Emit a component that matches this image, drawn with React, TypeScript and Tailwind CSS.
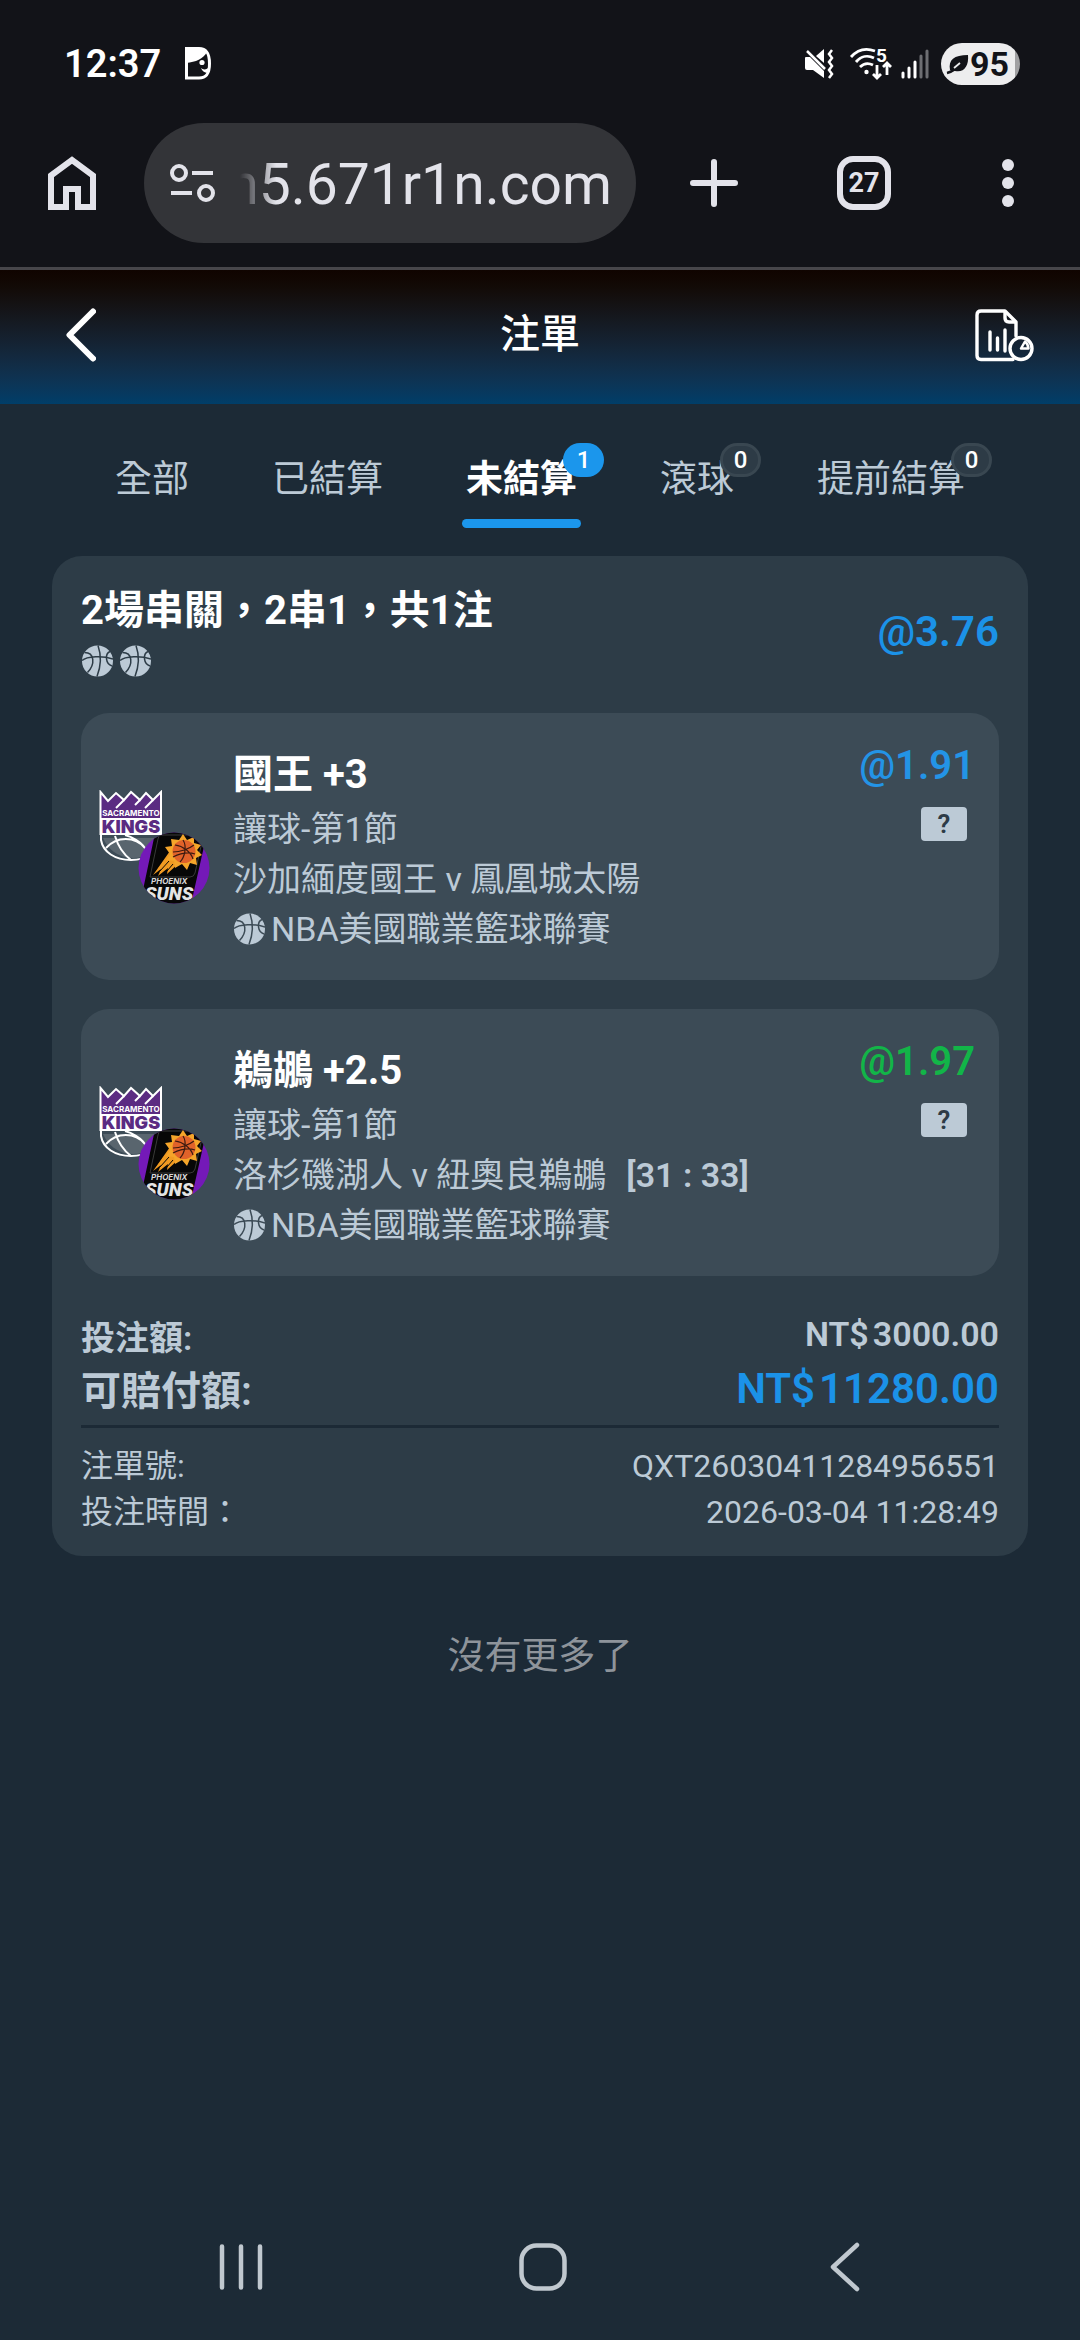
import React from 'react';

type Tab = { label: string; count?: number; active?: boolean };

type Leg = {
  pick: string;
  odds: string;
  oddsClass: string;
  market: string;
  match: string;
  score?: string;
  league: string;
};

const tabs: Tab[] = [
  { label: '全部' },
  { label: '已結算' },
  { label: '未結算', count: 1, active: true },
  { label: '滾球', count: 0 },
  { label: '提前結算', count: 0 },
];

const legs: Leg[] = [
  {
    pick: '國王 +3',
    odds: '1.91',
    oddsClass: 'text-[#2394e6]',
    market: '讓球-第1節',
    match: '沙加緬度國王 v 鳳凰城太陽',
    league: 'NBA美國職業籃球聯賽',
  },
  {
    pick: '鵜鶘 +2.5',
    odds: '1.97',
    oddsClass: 'text-[#12b548]',
    market: '讓球-第1節',
    match: '洛杉磯湖人 v 紐奧良鵜鶘',
    score: '[31 : 33]',
    league: 'NBA美國職業籃球聯賽',
  },
];

const Basketball: React.FC<{ line: string }> = ({ line }) => (
  <svg viewBox="0 0 32 32" className="size-8 shrink-0" fill="none">
    <circle cx="16.5" cy="16" r="15.5" fill="#bccad6" />
    <g className={line} strokeWidth="1.5">
      <path d="M1 15.5C6 11 22 10.5 32 14" />
      <path d="M17 0.5C20 9 20 21 16 31.5" />
      <path d="M3.5 7.5C13.5 7.5 14.5 19 6.5 27.5" />
      <path d="M29 6.5C23.5 9 24.5 19 31 21" />
    </g>
  </svg>
);

const KingsLogo: React.FC = () => (
  <svg viewBox="0 0 64 72" className="h-[72px] w-16" fill="none">
    <path d="M6 52C12 62 22 68 34 68C48 68 58 60 60 48H4Z" fill="#59656e" />
    <path d="M2 44V50C4 62 16 70 32 70C48 70 60 62 62 50V44" stroke="#fff" strokeWidth="2" />
    <path d="M7 58C18 46 36 46 46 58M16 46C19 56 24 64 32 70M26 45C30 46 44 51 48 62" stroke="#fff" strokeWidth="2" />
    <path
      d="M1.5 2L9 11L17 3L25 10L32 2L41 10L47 3L54 10L62 2V44H1.5Z"
      fill="#5b2b82"
      stroke="#fff"
      strokeWidth="2"
    />
    <path d="M25 10L17 18M41 10L36 15M54 10L46 18" stroke="#fff" strokeWidth="2" />
    <path d="M2 28H62V44H2Z" fill="#fff" />
    <text x="32" y="26" textAnchor="middle" className="fill-white font-['Inter'] text-[8px] font-bold">
      SACRAMENTO
    </text>
    <text x="32" y="42.5" textAnchor="middle" className="fill-[#5b2b82] font-['Inter'] text-[18px] font-black">
      KINGS
    </text>
  </svg>
);

const SunsLogo: React.FC = () => (
  <svg viewBox="0 0 72 72" className="size-[72px]" fill="none">
    <defs>
      <clipPath id="suns-disc">
        <circle cx="36" cy="36" r="35.5" />
      </clipPath>
    </defs>
    <g clipPath="url(#suns-disc)">
      <rect width="72" height="72" fill="#7419b8" />
      <path d="M20 0H62Q69 2 67 10L53 72H2L16 6Q17 1 20 0Z" fill="#070707" />
      <path d="M22 3H60Q66 4 64 10L57 41Q56 45 52 45H12L20 7Q21 3 22 3Z" stroke="#3a3a3a" />
      <path d="M32 19L15 43L23 37L20 44L30 36L29 42L42 30Z" fill="#f09a22" />
      <path
        d="M45 2L49 8L56 5L56 11L63 13L59 18L64 23L58 26L59 33L52 31L49 38L44 32L37 36L36 29L28 28L32 22L27 15L34 14L33 7L41 8Z"
        fill="#f5a52a"
      />
      <circle cx="46" cy="19.5" r="11.5" fill="#e0622a" />
      <path
        d="M35 20C42 20 51 17 56 13M45 8C49 14 47 25 42 30M37 13C45 14 53 20 55 27M35 25C43 21 51 20 57 22"
        stroke="#3b1a10"
        strokeWidth="1.2"
      />
      <path d="M27 24L17 39M31 29L22 39M35 32L29 39" stroke="#070707" />
      <text x="13" y="52" className="fill-[#d8d8d8] font-['Inter'] text-[8px] font-bold italic">
        PHOENIX
      </text>
      <text x="7" y="68" className="fill-[#e4e4e4] font-['Roboto'] text-[19px] font-black italic">
        SUNS
      </text>
    </g>
  </svg>
);

const StatusBar: React.FC = () => (
  <div className="flex h-[123px] items-center justify-between pt-1 pr-[60px] pl-16 text-white">
    <div className="flex items-center gap-6">
      <span className="text-[38px] leading-none font-semibold">12:37</span>
      <svg viewBox="0 0 26 33" className="h-[33px] w-[26px]" fill="none">
        <path d="M1.5 1.5H14C22 1.5 24.5 7 24.5 16.5C24.5 26 22 31 14 31H1.5Z" stroke="#fff" strokeWidth="3" />
        <path d="M1 1H15C19 1 21 3 22 5C18 12 11 15 1 16Z" fill="#fff" />
        <circle cx="17" cy="15.5" r="2.6" fill="#fff" />
        <path d="M16 21C18 23 22 23 24 20V26C20 26 17 24 16 21Z" fill="#fff" />
      </svg>
    </div>
    <div className="flex items-center">
      <svg viewBox="0 0 31 32" className="mr-3.5 h-8 w-[31px]" fill="none">
        <path d="M1 10Q1 9 2 9H6L20 23V30L9 22H3Q1 22 1 20Z" fill="#fff" />
        <path d="M20 1V15L12 8Z" fill="#fff" />
        <path d="M3 3L21 21" stroke="#fff" strokeWidth="2.5" />
        <path d="M28 2L25 6L28 10L25 14L28 18L25 22L28 26L25 30" stroke="#fff" strokeWidth="2.5" />
      </svg>
      <svg viewBox="0 -6 44 46" className="mr-2 h-[46px] w-11" fill="none">
        <path d="M2 10C9 2 18 1 26 4M7 15C12 9 19 8 25 11M11 20C15 16 20 16 24 18" stroke="#fff" strokeWidth="2.8" />
        <circle cx="17.5" cy="25" r="2.2" fill="#fff" />
        <path d="M28 18V31M24 27L28 31L32 27M38 28V17M34 20L38 16L42 20" stroke="#fff" strokeWidth="2.8" />
        <text x="27" y="15" className="fill-white font-['Roboto'] text-[19px] font-bold">
          5
        </text>
      </svg>
      <svg viewBox="0 0 28 32" className="mr-3 h-8 w-7" strokeWidth="3" strokeLinecap="round">
        <path d="M2 25V29M8 20V29M14 14V29" stroke="#fff" />
        <path d="M20 8V29M26 3V29" stroke="#6d6e72" />
      </svg>
      <div className="flex h-[42px] w-[79px] items-center rounded-full bg-linear-to-r from-[#ededee] from-94% to-[#a0a0a2] to-94% pl-[5px] text-[#121318]">
        <svg viewBox="0 0 24 22" className="h-[22px] w-6 shrink-0" fill="none">
          <path d="M4 17C2 7 8 2 22 2C23 13 18 20 9 18Z" fill="#121318" />
          <path d="M1 20C6 19 10 16 14 10" stroke="#121318" strokeWidth="2.5" />
          <path d="M8 15L14 10" stroke="#ededee" strokeWidth="1.8" />
        </svg>
        <span className="text-[34px] leading-none font-bold">95</span>
      </div>
    </div>
  </div>
);

const BrowserBar: React.FC = () => (
  <div className="flex h-36 items-center pb-6 text-[#e3e3ea]">
    <button aria-label="Home" className="flex w-36 justify-center">
      <svg viewBox="0 0 48 54" className="h-[54px] w-12" fill="none" stroke="currentColor" strokeWidth="6">
        <path d="M3 19.5L24 4L45 19.5V51H30V33H18V51H3Z" />
      </svg>
    </button>
    <div className="flex h-[120px] min-w-0 flex-1 items-center rounded-full bg-[#333438] pr-6 pl-[26px]">
      <svg viewBox="0 0 46 40" className="h-10 w-[46px] shrink-0" fill="none" stroke="currentColor" strokeWidth="4">
        <circle cx="9" cy="10" r="7" />
        <path d="M22 10H43M1 30H22" />
        <circle cx="36" cy="30" r="7" />
      </svg>
      <div className="ml-6 flex min-w-0 flex-1 justify-end overflow-hidden [mask-image:linear-gradient(to_right,transparent,black_36px)]">
        <input
          aria-label="Address"
          readOnly
          value="n5.671r1n.com"
          className="w-[440px] shrink-0 bg-transparent pt-1 text-right text-[57px] leading-[80px] outline-none"
        />
      </div>
    </div>
    <button aria-label="New tab" className="flex w-[156px] justify-center">
      <svg viewBox="0 0 48 48" className="size-12" stroke="currentColor" strokeWidth="6" strokeLinecap="round">
        <path d="M24 3V45M3 24H45" />
      </svg>
    </button>
    <button aria-label="Tabs" className="flex w-36 justify-center">
      <span className="flex size-[54px] items-center justify-center rounded-2xl border-6 border-current text-[27px] leading-none font-bold">
        27
      </span>
    </button>
    <button aria-label="More" className="flex w-36 justify-center">
      <svg viewBox="0 0 12 48" className="h-12 w-3" fill="currentColor">
        <circle cx="6" cy="6" r="6" />
        <circle cx="6" cy="24" r="6" />
        <circle cx="6" cy="42" r="6" />
      </svg>
    </button>
  </div>
);

const PageHeader: React.FC = () => (
  <header className="flex h-[137px] items-center justify-between border-t-3 border-[#47464a] bg-linear-to-b from-[#100400] to-[#003e69] px-[46px] pb-1 text-white">
    <button aria-label="返回" className="flex w-[70px] justify-center">
      <svg viewBox="0 0 30 54" className="h-[54px] w-[30px]" fill="none" stroke="currentColor" strokeWidth="6" strokeLinecap="round" strokeLinejoin="round">
        <path d="M27 3.5L3.5 27L27 50.5" />
      </svg>
    </button>
    <h1 className="text-[40px] leading-none font-medium">注單</h1>
    <button aria-label="報表" className="flex w-[70px] justify-end">
      <svg viewBox="0 0 60 54" className="h-[54px] w-[60px]" fill="none" stroke="currentColor" strokeWidth="3.4" strokeLinecap="round" strokeLinejoin="round">
        <path d="M39 51.5H7Q3 51.5 3 47.5V7Q3 3 7 3H31L42 14V28" />
        <path d="M31 4V10Q31 14 35 14H41" />
        <path d="M16 24V42M23.5 30V42M31 22V43" />
        <circle cx="47" cy="40.5" r="11" />
        <path d="M47 40.5L51 33.5Q54 36 54.5 40.5Z" strokeWidth="2.5" />
      </svg>
    </button>
  </header>
);

const TabNav: React.FC = () => (
  <nav className="flex justify-center gap-[83px] pt-[52px]">
    {tabs.map((tab) => (
      <button
        key={tab.label}
        className={`relative h-[72px] pb-6 text-[37px] leading-[48px] ${
          tab.active ? 'font-bold text-white' : 'text-[#bccad6]'
        }`}
      >
        {tab.label}
        {tab.count !== undefined && (
          <span
            className={`absolute -top-[13px] left-full -ml-3.5 flex h-[34px] w-[41px] items-center justify-center rounded-full text-[24px] leading-none font-medium text-white ${
              tab.active ? 'bg-[#1b96ec]' : 'border-3 border-[#394751] bg-[#2d3b46]'
            }`}
          >
            {tab.count}
          </span>
        )}
        {tab.active && <span className="absolute -inset-x-1 bottom-0 h-[9px] rounded-full bg-[#1b96ec]" />}
      </button>
    ))}
  </nav>
);

const LegCard: React.FC<{ leg: Leg }> = ({ leg }) => (
  <li className="flex rounded-[28px] bg-[#3c4b56] pl-[18px] text-[#bccad6]">
    <div className="relative h-[113px] w-[134px] shrink-0 self-center">
      <KingsLogo />
      <div className="absolute top-[42px] left-[39px]">
        <SunsLogo />
      </div>
    </div>
    <div className="min-w-0 flex-1 pt-[33px] pb-[26px] text-[34px] leading-[50px]">
      <h3 className="text-[40px] leading-[58px] font-bold text-white">{leg.pick}</h3>
      <p>{leg.market}</p>
      <p>
        {leg.match}
        {leg.score && <span className="ml-5 font-semibold">{leg.score}</span>}
      </p>
      <p className="flex items-center gap-1.5">
        <Basketball line="stroke-[#3c4b56]" />
        {leg.league}
      </p>
    </div>
    <div className="flex flex-col items-end pt-6 pr-6">
      <p className={`text-[40px] leading-[58px] font-semibold ${leg.oddsClass}`}>
        <span className="font-medium">@</span>
        {leg.odds}
      </p>
      <button
        aria-label="說明"
        className="mt-3 mr-2 flex h-[34px] w-[46px] items-center justify-center rounded bg-[#bccad6] text-[26px] leading-none font-semibold text-[#2d3b46]"
      >
        ?
      </button>
    </div>
  </li>
);

const Summary: React.FC = () => (
  <dl className="mt-[35px] text-[#bccad6]">
    <div className="flex justify-between font-semibold">
      <dt className="text-[34px] leading-[54px]">投注額:</dt>
      <dd className="text-[34px] leading-[46px]">
        NT$<span className="ml-1">3000.00</span>
      </dd>
    </div>
    <div className="flex justify-between border-b-3 border-[#1c2a36] pb-1.5 font-semibold">
      <dt className="text-[40px] leading-[54px]">可賠付額:</dt>
      <dd className="text-[42px] leading-[48px] text-[#1b92e8]">
        NT$<span className="ml-1">11280.00</span>
      </dd>
    </div>
    <div className="flex justify-between pt-[15px] text-[32px] leading-[46px]">
      <dt>注單號:</dt>
      <dd>QXT26030411284956551</dd>
    </div>
    <div className="flex justify-between text-[32px] leading-[46px]">
      <dt>投注時間：</dt>
      <dd>2026-03-04 11:28:49</dd>
    </div>
  </dl>
);

const SystemNav: React.FC = () => (
  <div className="flex h-[146px] items-center pr-[84px] pl-[90px] text-[#c0c8cf]">
    <button aria-label="Recents" className="flex flex-1 justify-center">
      <svg viewBox="0 0 44 48" className="h-12 w-11" stroke="currentColor" strokeWidth="4.5" strokeLinecap="round">
        <path d="M3 3.5V44.5M22 3.5V44.5M41 3.5V44.5" />
      </svg>
    </button>
    <button aria-label="Home screen" className="flex flex-1 justify-center">
      <svg viewBox="0 0 48 48" className="size-12" fill="none" stroke="currentColor" strokeWidth="4.5">
        <rect x="2.5" y="2.5" width="43" height="43" rx="15" />
      </svg>
    </button>
    <button aria-label="Back" className="flex flex-1 justify-center">
      <svg viewBox="0 0 30 50" className="h-[50px] w-[30px]" fill="none" stroke="currentColor" strokeWidth="4.5" strokeLinecap="round" strokeLinejoin="round">
        <path d="M27 3L3 25L27 47" />
      </svg>
    </button>
  </div>
);

const App: React.FC = () => {
  return (
    <div lang="zh-Hant" className="flex min-h-screen flex-col bg-[#1c2a36] font-['Roboto','Noto_Sans_CJK_TC',sans-serif]">
      <div className="bg-[#121318]">
        <StatusBar />
        <BrowserBar />
      </div>
      <PageHeader />
      <TabNav />

      <main className="flex-1 px-[52px] pt-7">
        <section className="rounded-[30px] bg-[#2d3c47] px-[29px] pt-[31px] pb-[21px]">
          <div className="flex items-center justify-between">
            <div>
              <h2 className="text-[40px] leading-[48px] font-bold text-white">2場串關，2串1，共1注</h2>
              <div className="mt-2.5 flex gap-1.5">
                <Basketball line="stroke-[#2d3c47]" />
                <Basketball line="stroke-[#2d3c47]" />
              </div>
            </div>
            <p className="text-[42px] leading-[58px] font-semibold text-[#1b92e8]">
              <span className="font-medium">@</span>3.76
            </p>
          </div>
          <ul className="mt-9 flex flex-col gap-[29px]">
            {legs.map((leg) => (
              <LegCard key={leg.pick} leg={leg} />
            ))}
          </ul>
          <Summary />
        </section>
        <p className="mt-[77px] text-center text-[37px] leading-[48px] text-[#8e949b]">沒有更多了</p>
      </main>

      <SystemNav />
    </div>
  );
};

export default App;
